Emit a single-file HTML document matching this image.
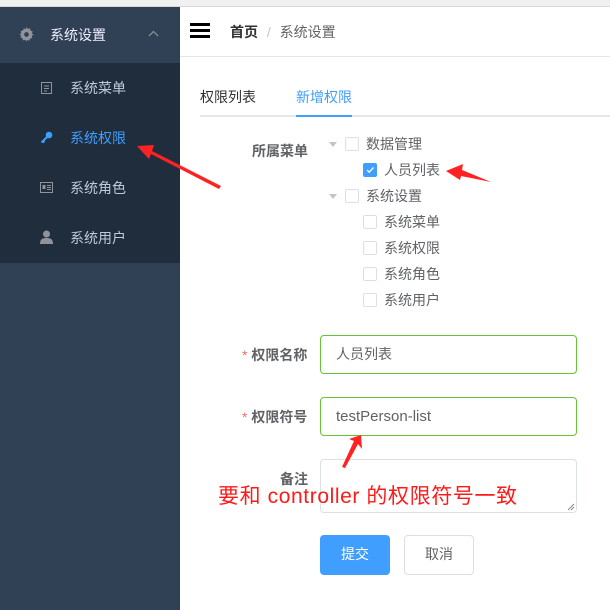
<!DOCTYPE html>
<html><head><meta charset="utf-8"><style>
*{box-sizing:border-box;margin:0;padding:0}
body{width:610px;height:610px;overflow:hidden;background:#fff;font-family:"Liberation Sans","Noto Sans CJK SC",sans-serif;position:relative;font-size:14px}
.a{position:absolute}
.topline{left:0;top:0;width:610px;height:7px;background:#f0f0f0;border-bottom:1px solid #d8d8d8}
.side{left:0;top:7px;width:180px;height:603px;background:#304156}
.sub{left:0;top:63px;width:180px;height:200px;background:#1f2d3d}
.mi{color:#bfcbd9;font-size:14px}
.cb{width:14px;height:14px;border:1px solid #dcdfe6;border-radius:2px;background:#fff}
.tx{color:#606266;font-size:14px}
.tri{width:0;height:0;border-left:4px solid transparent;border-right:4px solid transparent;border-top:5px solid #c0c4cc}
.inp{border:1px solid #67c23a;border-radius:4px;left:320px;width:257px;height:39px;color:#606266;padding-left:15px;line-height:37px}
.lbl{color:#606266;font-weight:bold;font-size:14px}
.star{color:#f56c6c;font-weight:normal}
</style></head><body>
<div class="a topline"></div>
<div class="a side"></div>
<div class="a sub"></div>
<svg class="a" style="left:19px;top:27px" width="15" height="15" viewBox="0 0 16 16"><path fill="#909399" d="M8 0l1.5 2 2.4-.6.4 2.4 2.3.9-.9 2.3L15.6 8l-2 1.5.6 2.4-2.4.4-.9 2.3-2.3-.9L8 15.6 6.5 13.6l-2.4.6-.4-2.4-2.3-.9.9-2.3L0.4 8l2-1.5-.6-2.4 2.4-.4.9-2.3 2.3.9z"/><circle cx="8" cy="8" r="2.5" fill="#304156"/></svg>
<div class="a mi" style="left:50px;top:25px;color:#eef">系统设置</div>
<svg class="a" style="left:148px;top:30px" width="11" height="7"><path d="M1 6L5.5 1.5 10 6" stroke="#909399" fill="none" stroke-width="1.2"/></svg>
<svg class="a" style="left:41px;top:82px" width="11" height="12"><rect x="0.5" y="0.5" width="10" height="11" fill="none" stroke="#909399"/><path d="M3 4h5M3 6.5h5M3 9h3" stroke="#909399"/></svg>
<div class="a mi" style="left:70px;top:78px">系统菜单</div>
<svg class="a" style="left:40px;top:131px" width="13" height="13"><circle cx="9" cy="4" r="3.3" fill="#409eff"/><path d="M7 6L1.5 11.5M3 10l1.5 1.5" stroke="#409eff" stroke-width="2"/></svg>
<div class="a mi" style="left:70px;top:128px;color:#409eff">系统权限</div>
<svg class="a" style="left:40px;top:182px" width="13" height="11"><rect x="0.5" y="0.5" width="12" height="10" fill="none" stroke="#909399"/><rect x="2.5" y="3" width="3" height="4" fill="#909399"/><path d="M7 3.5h4M7 5.5h4M7 7.5h4" stroke="#909399"/></svg>
<div class="a mi" style="left:70px;top:178px">系统角色</div>
<svg class="a" style="left:40px;top:230px" width="13" height="14"><circle cx="6.5" cy="4" r="3.5" fill="#909399"/><path d="M0 14c0-5 2.5-6 6.5-6s6.5 1 6.5 6z" fill="#909399"/></svg>
<div class="a mi" style="left:70px;top:228px">系统用户</div>

<div class="a" style="left:180px;top:56px;width:430px;height:1px;background:#e6e6e6"></div>
<div class="a" style="left:190px;top:23px;width:20px;height:3px;background:#000;box-shadow:0 6px 0 #000,0 12px 0 #000"></div>
<div class="a" style="left:230px;top:22px;color:#303133;font-weight:bold">首页 <span style="color:#c0c4cc;font-weight:normal;margin:0 5px">/</span> <span style="color:#606266;font-weight:normal">系统设置</span></div>

<div class="a tx" style="left:200px;top:87px;color:#303133">权限列表</div>
<div class="a tx" style="left:296px;top:87px;color:#409eff">新增权限</div>
<div class="a" style="left:200px;top:115px;width:410px;height:2px;background:#e4e7ed"></div>
<div class="a" style="left:296px;top:115px;width:56px;height:2px;background:#409eff"></div>

<div class="a lbl" style="left:252px;top:141px">所属菜单</div>
<div class="a tri" style="left:329px;top:142px"></div><div class="a cb" style="left:345px;top:137px"></div><div class="a tx" style="left:366px;top:134px">数据管理</div>
<div class="a cb" style="left:363px;top:163px;background:#409eff;border-color:#409eff"></div><svg class="a" style="left:363px;top:163px" width="14" height="14"><path d="M4 7l2.2 2.2L10.5 4.5" stroke="#fff" fill="none" stroke-width="1.3"/></svg><div class="a tx" style="left:384px;top:160px">人员列表</div>
<div class="a tri" style="left:329px;top:194px"></div><div class="a cb" style="left:345px;top:189px"></div><div class="a tx" style="left:366px;top:186px">系统设置</div>
<div class="a cb" style="left:363px;top:215px"></div><div class="a tx" style="left:384px;top:212px">系统菜单</div>
<div class="a cb" style="left:363px;top:241px"></div><div class="a tx" style="left:384px;top:238px">系统权限</div>
<div class="a cb" style="left:363px;top:267px"></div><div class="a tx" style="left:384px;top:264px">系统角色</div>
<div class="a cb" style="left:363px;top:293px"></div><div class="a tx" style="left:384px;top:290px">系统用户</div>

<div class="a lbl" style="left:242px;top:345px"><span class="star">*</span> 权限名称</div>
<div class="a inp" style="top:335px">人员列表</div>
<div class="a lbl" style="left:242px;top:407px"><span class="star">*</span> 权限符号</div>
<div class="a inp" style="top:397px;font-size:15px">testPerson-list</div>
<div class="a lbl" style="left:280px;top:469px">备注</div>
<div class="a" style="left:320px;top:459px;width:257px;height:54px;border:1px solid #dcdfe6;border-radius:4px"></div>
<svg class="a" style="left:567px;top:503px" width="8" height="8"><path d="M1 7L7 1M4 7L7 4" stroke="#888"/></svg>
<div class="a" style="left:320px;top:535px;width:70px;height:40px;background:#409eff;border-radius:4px;color:#fff;text-align:center;line-height:38px">提交</div>
<div class="a" style="left:404px;top:535px;width:70px;height:40px;border:1px solid #dcdfe6;border-radius:4px;color:#606266;text-align:center;line-height:36px">取消</div>

<div class="a" style="left:218px;top:480px;color:#ff1a1a;font-size:21px;white-space:nowrap;letter-spacing:0.6px">要和 controller 的权限符号一致</div>

<svg class="a" style="left:0;top:0" width="610" height="610">
<path d="M221 186L152 151L154 145L137 146L149 159L151 154L219 189z" fill="#f22"/>
<path d="M491 182L462 170L463 164L446 171L460 180L461 176z" fill="#f22"/>
<path d="M342 467L354 441L349 439L361 435L362 449L358 444L345 468z" fill="#f22"/>
</svg>
</body></html>
